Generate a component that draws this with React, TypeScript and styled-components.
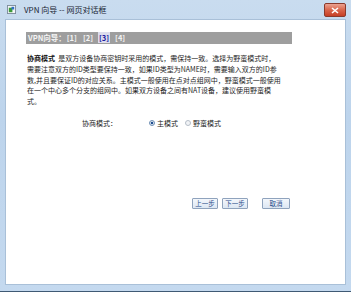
import React from 'react';
import styled, { createGlobalStyle } from 'styled-components';

const GlobalStyle = createGlobalStyle`
  html, body {
    margin: 0;
    padding: 0;
    background: #ffffff;
  }
  body {
    font-family: "Noto Sans CJK SC", "Liberation Sans", sans-serif;
  }
`;

const App = () => {
  return (
    <>
      <GlobalStyle />
      <Frame>
        <TitleBar>
          <PageIcon viewBox='0 0 10 10'>
            <rect x='0.5' y='0.5' width='9' height='9' fill='#f4f6f8' stroke='#7b8a99' />
            <rect x='2' y='3' width='4' height='5' fill='#3d9a3a' />
            <rect x='5' y='2' width='3' height='3' fill='#2f6fc4' />
          </PageIcon>
          <Title>VPN 向导 -- 网页对话框</Title>
          <CloseButton>
            <svg width='8' height='7' viewBox='0 0 8 7'>
              <path d='M1 1 L7 6 M7 1 L1 6' stroke='#ffffff' strokeWidth='1.6' />
            </svg>
          </CloseButton>
        </TitleBar>
        <Client>
          <StepBar>
            VPN向导：<StepLink>[1]</StepLink><StepLink>[2]</StepLink>
            <StepLink $active>[3]</StepLink><StepLink>[4]</StepLink>
          </StepBar>
          <Description>
            <strong>协商模式</strong>&nbsp;&nbsp;是双方设备协商密钥时采用的模式，需保持一致。选择为野蛮模式时，<br />
            需要注意双方的ID类型要保持一致，如果ID类型为NAME时，需要输入双方的ID参<br />
            数,并且要保证ID的对应关系。主模式一般使用在点对点组网中，野蛮模式一般使用<br />
            在一个中心多个分支的组网中。如果双方设备之间有NAT设备，建议使用野蛮模<br />
            式。
          </Description>
          <OptionRow>
            <OptionLabel>协商模式：</OptionLabel>
            <RadioOption>
              <Radio $checked />主模式
            </RadioOption>
            <RadioOption>
              <Radio />野蛮模式
            </RadioOption>
          </OptionRow>
          <ButtonRow>
            <NavButton type='button'>上一步</NavButton>
            <NavButton type='button'>下一步</NavButton>
            <CancelButton type='button'>取消</CancelButton>
          </ButtonRow>
        </Client>
      </Frame>
    </>
  );
};

const Frame = styled.div`
  box-sizing: border-box;
  width: 351px;
  height: 292px;
  display: flex;
  flex-direction: column;
  padding: 0 5px 6px 5px;
  background: linear-gradient(180deg, #c9dcef 0%, #bdd4ec 40%, #c4d9ef 100%);
  border-bottom: 1px solid #3f5a74;
`;

const TitleBar = styled.div`
  height: 19px;
  display: flex;
  align-items: center;
  gap: 5px;
  padding-left: 2px;
`;

const PageIcon = styled.svg`
  width: 9px;
  height: 9px;
`;

const Title = styled.span`
  flex: 1;
  font-size: 8px;
  color: #1a2533;
  margin-left: 3px;
`;

const CloseButton = styled.div`
  width: 20px;
  height: 12px;
  margin-top: 1px;
  display: flex;
  align-items: center;
  justify-content: center;
  border-radius: 2px;
  border: 1px solid #8a3a2c;
  background: linear-gradient(180deg, #eba291 0%, #d9654b 50%, #c63f25 100%);
`;

const Client = styled.div`
  flex: 1;
  box-sizing: border-box;
  background: #ffffff;
  border: 1px solid #a9c0d8;
  padding: 12px 0 0 20px;
  display: flex;
  flex-direction: column;
`;

const StepBar = styled.div`
  width: 266px;
  height: 12px;
  box-sizing: border-box;
  padding-left: 2px;
  background: #9e9e9e;
  color: #f4f4f4;
  font-size: 7.5px;
  font-weight: bold;
  line-height: 12px;
  white-space: nowrap;
`;

const StepLink = styled.span<{ $active?: boolean }>`
  margin-right: 4px;
  padding: 0 1px;
  color: ${(p) => (p.$active ? '#1a1aa0' : '#f4f4f4')};
  background: ${(p) => (p.$active ? '#dcdcec' : 'transparent')};
`;

const Description = styled.p`
  margin: 9px 0 0 1px;
  font-size: 7px;
  line-height: 10.8px;
  color: #1e1e1e;
  white-space: nowrap;

  strong {
    font-weight: bold;
    color: #111111;
  }
`;

const OptionRow = styled.div`
  margin: 11px 0 0 56px;
  display: flex;
  align-items: center;
  font-size: 7px;
  color: #222222;
`;

const OptionLabel = styled.span`
  width: 67px;
`;

const RadioOption = styled.label`
  display: flex;
  align-items: center;
  gap: 2px;
  margin-right: 7px;
`;

const Radio = styled.span<{ $checked?: boolean }>`
  width: 6px;
  height: 6px;
  box-sizing: border-box;
  border-radius: 50%;
  border: 1px solid ${(p) => (p.$checked ? '#6e8eb3' : '#b5bec8')};
  background: ${(p) =>
    p.$checked
      ? 'radial-gradient(circle, #1f4e90 0 1.4px, #e6edf5 1.6px)'
      : '#f1f3f6'};
`;

const ButtonRow = styled.div`
  margin: 70px 0 0 166px;
  display: flex;
  gap: 4px;
`;

const NavButton = styled.button`
  height: 11px;
  width: 26px;
  padding: 0;
  box-sizing: border-box;
  border: 1px solid #8fa3bd;
  border-radius: 1px;
  background: linear-gradient(180deg, #f3f7fc 0%, #dde7f3 100%);
  color: #2a4d8a;
  font-family: "Noto Sans CJK SC", "Liberation Sans", sans-serif;
  font-size: 6.5px;
  line-height: 9px;
`;

const CancelButton = styled(NavButton)`
  width: 28px;
  margin-left: 10px;
`;

export default App;
